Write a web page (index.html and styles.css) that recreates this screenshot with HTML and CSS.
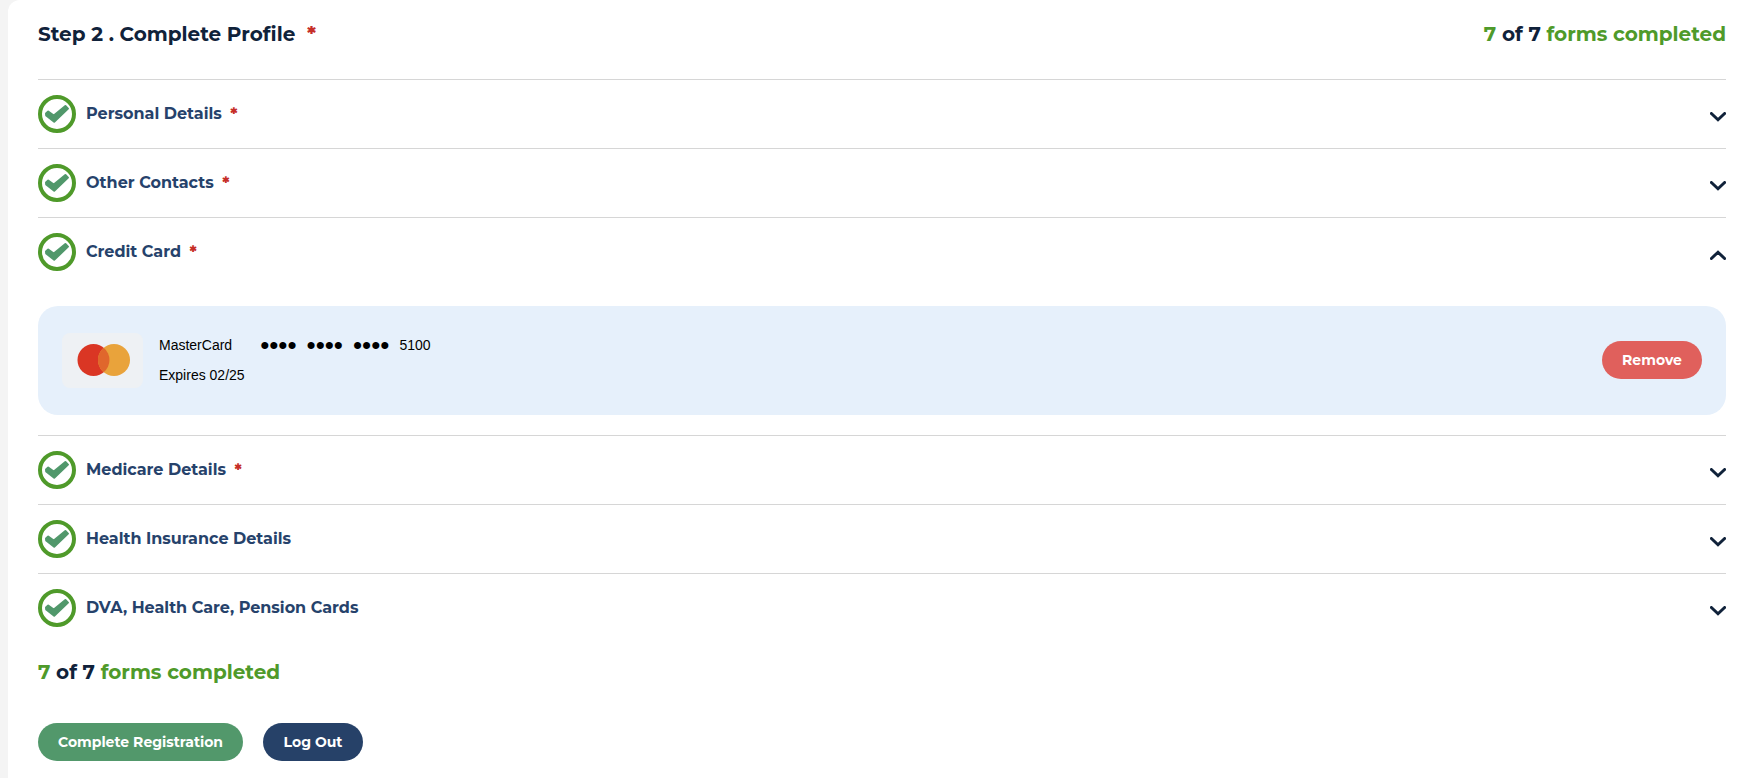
FILE: index.html
```
<!DOCTYPE html>
<html lang="en">

<head>
  <title>Complete Profile</title>
  <meta charset="UTF-8">
  <meta name="viewport" content="width=device-width, initial-scale=1.0">
  <link rel="stylesheet" href="styles.css">
</head>

<body>
  <!-- shared icons -->
  <svg class="sprite" aria-hidden="true">
    <symbol id="icon-done" viewBox="0 0 38 38">
      <circle cx="19" cy="19" r="17" fill="none" stroke="#4f9a2a" stroke-width="4" />
      <path d="M8 18.6 L10.2 16.6 L15.8 20.6 L27.4 11 L30 13.6 L16.2 26.8 L8.2 20.4 Z" fill="#51986b" stroke="#51986b" stroke-width="2" stroke-linejoin="round" />
    </symbol>
    <symbol id="icon-chevron" viewBox="0 0 16 10">
      <path d="M1.4 1.5 L8 7.8 L14.6 1.5" fill="none" stroke="#10223a" stroke-width="3" stroke-linecap="round" />
    </symbol>
  </svg>

  <main class="card">
    <header class="card-header">
      <h1 class="title">Step 2 . Complete Profile <span class="required">*</span></h1>
      <p class="progress"><span class="done">7</span> of 7 <span class="done">forms completed</span></p>
    </header>

    <section class="item">
      <button class="item-toggle" type="button" aria-expanded="false">
        <svg class="check"><use href="#icon-done" /></svg>
        <span class="item-name">Personal Details <span class="required">*</span></span>
        <svg class="chevron"><use href="#icon-chevron" /></svg>
      </button>
    </section>

    <section class="item">
      <button class="item-toggle" type="button" aria-expanded="false">
        <svg class="check"><use href="#icon-done" /></svg>
        <span class="item-name">Other Contacts <span class="required">*</span></span>
        <svg class="chevron"><use href="#icon-chevron" /></svg>
      </button>
    </section>

    <section class="item">
      <button class="item-toggle" type="button" aria-expanded="true">
        <svg class="check"><use href="#icon-done" /></svg>
        <span class="item-name">Credit Card <span class="required">*</span></span>
        <svg class="chevron open"><use href="#icon-chevron" /></svg>
      </button>
      <div class="payment">
        <svg class="payment-logo" viewBox="0 0 81 55">
          <rect width="81" height="55" rx="8" fill="#eef1f4" />
          <circle cx="31.5" cy="27" r="16" fill="#da3624" />
          <circle cx="52" cy="27" r="16" fill="#e9a33b" />
          <path d="M41.7 14.7 A16 16 0 0 1 41.7 39.3 A16 16 0 0 1 41.7 14.7 Z" fill="#e0672c" />
        </svg>
        <div class="payment-info">
          <p class="payment-number">
            <span class="brand">MasterCard</span>
            <span class="dots">••••</span>
            <span class="dots">••••</span>
            <span class="dots">••••</span>
            <span>5100</span>
          </p>
          <p>Expires 02/25</p>
        </div>
        <button class="btn btn-danger" type="button">Remove</button>
      </div>
    </section>

    <section class="item">
      <button class="item-toggle" type="button" aria-expanded="false">
        <svg class="check"><use href="#icon-done" /></svg>
        <span class="item-name">Medicare Details <span class="required">*</span></span>
        <svg class="chevron"><use href="#icon-chevron" /></svg>
      </button>
    </section>

    <section class="item">
      <button class="item-toggle" type="button" aria-expanded="false">
        <svg class="check"><use href="#icon-done" /></svg>
        <span class="item-name">Health Insurance Details</span>
        <svg class="chevron"><use href="#icon-chevron" /></svg>
      </button>
    </section>

    <section class="item">
      <button class="item-toggle" type="button" aria-expanded="false">
        <svg class="check"><use href="#icon-done" /></svg>
        <span class="item-name">DVA, Health Care, Pension Cards</span>
        <svg class="chevron"><use href="#icon-chevron" /></svg>
      </button>
    </section>

    <footer class="card-footer">
      <p class="progress"><span class="done">7</span> of 7 <span class="done">forms completed</span></p>
      <div class="actions">
        <button class="btn btn-primary" type="button">Complete Registration</button>
        <button class="btn btn-dark" type="button">Log Out</button>
      </div>
    </footer>
  </main>
</body>

</html>
```
FILE: styles.css
```
:root {
  --text-color: #10223a;
  --link-color: #26426b;
  --done-color: #4f9a2a;
  --required-color: #c62f28;
  --line-color: #d6d6d6;
}

* {
  box-sizing: border-box;
  margin: 0;
  padding: 0;
}

body {
  background-color: #f4f4f4;
  color: var(--text-color);
  font-family: Montserrat, Inter, sans-serif;
  padding-left: 8px;
}

.sprite {
  display: none;
}

.card {
  background-color: white;
  border-top-left-radius: 12px;
  min-height: 100vh;
  padding: 19px 22px 17px 30px;
}

.card-header {
  display: flex;
  justify-content: space-between;
  align-items: center;
  padding-bottom: 30px;
}

.title,
.progress {
  font-size: 20px;
  line-height: 30px;
  font-weight: 700;
}

.done {
  color: var(--done-color);
}

.required {
  color: var(--required-color);
  font-weight: 800;
  margin-left: 4px;
}

.title .required {
  margin-left: 6px;
}

.item {
  border-top: 1px solid var(--line-color);
}

.item-toggle {
  display: flex;
  align-items: center;
  gap: 10px;
  width: 100%;
  padding: 15px 0;
  border: none;
  background: none;
  color: var(--link-color);
  font: inherit;
  font-size: 16px;
  line-height: 24px;
  font-weight: 700;
  text-align: left;
  cursor: pointer;
}

.check {
  width: 38px;
  height: 38px;
}

.item-name {
  flex: 1;
}

.chevron {
  width: 16px;
  height: 10px;
  margin-top: 5px;
}

.chevron.open {
  transform: rotate(180deg);
}

.payment {
  display: flex;
  align-items: center;
  gap: 16px;
  margin: 20px 0;
  padding: 24px 24px 25px;
  border-radius: 20px;
  background-color: #e6f0fb;
  color: black;
  font-family: "Liberation Sans", Arial, sans-serif;
  font-size: 14px;
  line-height: 30px;
}

.payment-logo {
  width: 81px;
  height: 55px;
}

.payment-info {
  flex: 1;
}

.payment-number {
  display: flex;
  gap: 10px;
}

.brand {
  margin-right: 18px;
}

.dots {
  font-size: 26px;
}

.btn {
  height: 38px;
  min-width: 100px;
  padding: 0 20px;
  border: none;
  border-radius: 19px;
  color: white;
  font-family: Montserrat, Inter, sans-serif;
  font-size: 14px;
  font-weight: 700;
  cursor: pointer;
}

.btn-danger {
  background-color: #e0605c;
}

.btn-primary {
  background-color: #52986b;
}

.btn-dark {
  background-color: #264168;
}

.card-footer {
  padding-top: 15px;
}

.actions {
  display: flex;
  flex-wrap: wrap;
  gap: 20px;
  margin-top: 36px;
}
```
